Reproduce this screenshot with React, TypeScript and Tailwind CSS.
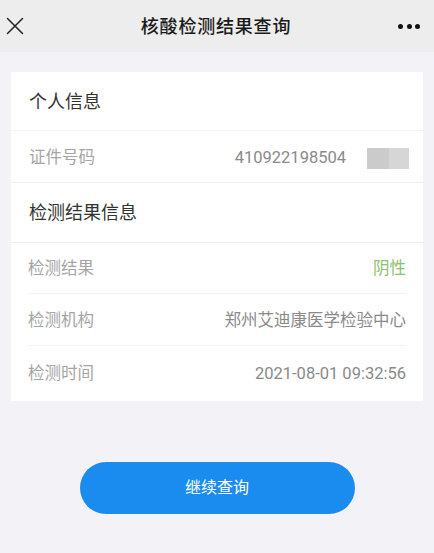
const font = { fontFamily: 'Roboto, "Noto Sans CJK SC", "Noto Sans", sans-serif' }

function App() {
  return (
    <div className="min-h-[553px] bg-[#f3f3f7] text-[#333]" style={font}>
      {/* Top bar */}
      <div className="h-[52px] bg-[#ededed] flex items-center justify-between pl-[6px] pr-[6px]">
        <svg width="18" height="18" viewBox="0 0 18 18" className="text-[#222]">
          <path d="M1.5 1.5 L16.5 16.5 M16.5 1.5 L1.5 16.5" stroke="currentColor" strokeWidth="1.5" strokeLinecap="round" />
        </svg>
        <h1 className="text-[18px] font-medium text-[#1a1a1a] tracking-[0.8px] ml-[10px]">核酸检测结果查询</h1>
        <div className="flex gap-[3.5px] pr-[8px]">
          <span className="w-[5px] h-[5px] rounded-full bg-[#111]"></span>
          <span className="w-[5px] h-[5px] rounded-full bg-[#111]"></span>
          <span className="w-[5px] h-[5px] rounded-full bg-[#111]"></span>
        </div>
      </div>

      {/* Result card */}
      <div className="mx-[11px] mt-[20px] bg-white">
        <div className="h-[59px] flex items-center px-[18px] border-b border-[#f3f3f3]">
          <span className="text-[18px] text-[#333]">个人信息</span>
        </div>
        <div className="h-[52px] pt-[3px] flex items-center justify-between pl-[18px] pr-[14px] border-b border-[#f0f0f0]">
          <span className="text-[16.5px] text-[#a5a5a5]">证件号码</span>
          <div className="flex items-center">
            <span className="text-[16.5px] text-[#8a8a8a]">410922198504</span>
            <div className="ml-[21px] flex h-[21px]">
              <div className="w-[22px] bg-[#cbcbcb]"></div>
              <div className="w-[20px] bg-[#d6d6d6]"></div>
            </div>
          </div>
        </div>
        <div className="h-[60px] flex items-center px-[18px] border-b border-[#f0f0f0]">
          <span className="text-[18px] text-[#333]">检测结果信息</span>
        </div>
        <div className="px-[17px]">
          <div className="h-[51px] pt-[3px] flex items-center justify-between border-b border-[#f2f2f2]">
            <span className="text-[16.5px] text-[#a5a5a5]">检测结果</span>
            <span className="text-[16.5px] text-[#8cc26f]">阴性</span>
          </div>
          <div className="h-[52px] pt-[3px] flex items-center justify-between border-b border-[#f2f2f2]">
            <span className="text-[16.5px] text-[#a5a5a5]">检测机构</span>
            <span className="text-[16.5px] text-[#8a8a8a]">郑州艾迪康医学检验中心</span>
          </div>
          <div className="h-[55px] pt-[2px] flex items-center justify-between">
            <span className="text-[16.5px] text-[#a5a5a5]">检测时间</span>
            <span className="text-[16.5px] text-[#8a8a8a]">2021-08-01 09:32:56</span>
          </div>
        </div>
      </div>

      {/* Continue button */}
      <div className="flex justify-center mt-[61px]">
        <button className="w-[275px] h-[52px] rounded-full bg-[#1a8cf0] text-white text-[16px]">
          继续查询
        </button>
      </div>
    </div>
  )
}

export default App
